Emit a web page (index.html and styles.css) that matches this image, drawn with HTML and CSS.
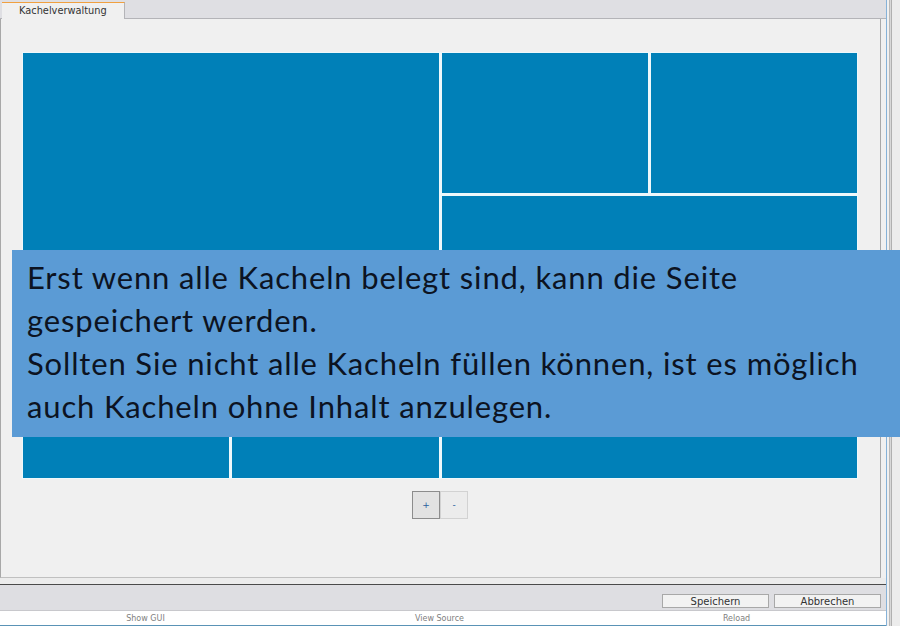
FILE: index.html
```html
<!DOCTYPE html>
<html lang="de">
<head>
<meta charset="utf-8">
<title>Kachelverwaltung</title>
<link rel="stylesheet" href="styles.css">
</head>
<body>
<div class="app">
  <div class="main">
    <div class="tabbar">
      <div class="tab">Kachelverwaltung</div>
    </div>
    <div class="panel">
      <div class="tiles">
        <div class="tile big-left"></div>
        <div class="tile"></div>
        <div class="tile"></div>
        <div class="tile big-right"></div>
        <div class="tile"></div>
        <div class="tile"></div>
      </div>
      <div class="zoom">
        <button class="zbtn active">+</button>
        <button class="zbtn">-</button>
      </div>
    </div>
    <div class="gap"></div>
    <div class="actions">
      <button class="abtn">Speichern</button>
      <button class="abtn">Abbrechen</button>
    </div>
    <div class="footer">
      <span>Show GUI</span>
      <span>View Source</span>
      <span>Reload</span>
    </div>
  </div>
  <div class="edge"></div>
</div>
<div class="callout">
  <p>Erst wenn alle Kacheln belegt sind, kann die Seite<br>gespeichert werden.<br>Sollten Sie nicht alle Kacheln füllen können, ist es möglich<br>auch Kacheln ohne Inhalt anzulegen.</p>
</div>
</body>
</html>
```
FILE: styles.css
```css
html, body {
  margin: 0;
  padding: 0;
}
body {
  width: 900px;
  height: 626px;
  overflow: hidden;
  background: #f0f0f0;
  font-family: "DejaVu Sans", "Liberation Sans", sans-serif;
  position: relative;
}
.app {
  display: flex;
  height: 626px;
}
.main {
  width: 886px;
  display: flex;
  flex-direction: column;
  border-right: 1px solid #86b2d8;
}
.edge {
  flex: 1;
  background: linear-gradient(to right, #f0f0f0 0 2px, #b8b8b8 2px 3px, #d8d8d8 3px 4px, #b0b0b0 4px 5px, #ececec 5px);
}
.tabbar {
  height: 18px;
  flex-shrink: 0;
  background: #dfdfe3;
  border-bottom: 1px solid #b4b4b8;
  display: flex;
  align-items: flex-end;
  padding-left: 2px;
}
.tab {
  width: 123px;
  height: 17px;
  margin-bottom: -1px;
  background: #f0f0f0;
  border-top: 1px solid #f0a040;
  border-right: 1px solid #b4b4b8;
  font-size: 9.8px;
  color: #333;
  line-height: 15px;
  padding-left: 17px;
  box-sizing: border-box;
}
.panel {
  height: 559px;
  flex-shrink: 0;
  box-sizing: border-box;
  margin-right: 5px;
  border-left: 1px solid #a8a8a8;
  border-right: 1px solid #a8a8a8;
  border-bottom: 1px solid #c0c0c0;
  background: #f0f0f0;
  padding: 33px 0 0 21px;
  display: flex;
  flex-direction: column;
}
.tiles {
  width: 836px;
  height: 427px;
  box-sizing: border-box;
  padding: 1px;
  background: #eef8fb;
  display: grid;
  grid-template-columns: repeat(4, 1fr);
  grid-template-rows: repeat(3, 1fr);
  gap: 3px;
}
.tile {
  background: #0080b8;
}
.big-left {
  grid-column: 1 / 3;
  grid-row: 1 / 3;
}
.big-right {
  grid-column: 3 / 5;
  grid-row: 2 / 4;
}
.zoom {
  width: 836px;
  display: flex;
  justify-content: center;
  margin-top: 12px;
}
.zbtn {
  width: 28px;
  height: 28px;
  margin: 0;
  padding: 0;
  font-family: "DejaVu Sans", sans-serif;
  font-size: 9px;
  color: #2a5f9e;
  background: #ececec;
  border: 1px solid #d2d2d2;
  box-sizing: border-box;
}
.zbtn.active {
  background: #e2e2e2;
  border-color: #8c8c8c;
}
.gap {
  height: 6px;
  flex-shrink: 0;
  background: #ececec;
  border-bottom: 1px solid #4a4a4a;
}
.actions {
  height: 26px;
  flex-shrink: 0;
  background: #dedee2;
  border-bottom: 1px solid #c8c8cc;
  display: flex;
  justify-content: flex-end;
  align-items: flex-start;
  gap: 5px;
  padding: 9px 5px 0 0;
  box-sizing: border-box;
}
.abtn {
  width: 107px;
  height: 14px;
  margin: 0;
  padding: 0;
  box-sizing: border-box;
  background: #f2f2f2;
  border: 1px solid #a8a8a8;
  font-family: "DejaVu Sans", sans-serif;
  font-size: 10px;
  line-height: 13px;
  color: #333;
}
.footer {
  flex: 1;
  min-height: 0;
  background: #ffffff;
  border-bottom: 1px solid #5a93b6;
  display: grid;
  grid-template-columns: 291px 297px 297px;
  font-size: 8px;
  color: #808080;
  text-align: center;
  line-height: 13px;
  padding-top: 1px;
  box-sizing: border-box;
}
.callout {
  position: absolute;
  left: 12px;
  top: 250px;
  width: 888px;
  height: 187px;
  background: #5b9bd5;
  box-sizing: border-box;
  padding: 6px 0 0 15px;
}
.callout p {
  margin: 0;
  font-family: Lato, "Open Sans", sans-serif;
  font-size: 31px;
  letter-spacing: 0.85px;
  line-height: 43px;
  color: #0c1322;
}
```
